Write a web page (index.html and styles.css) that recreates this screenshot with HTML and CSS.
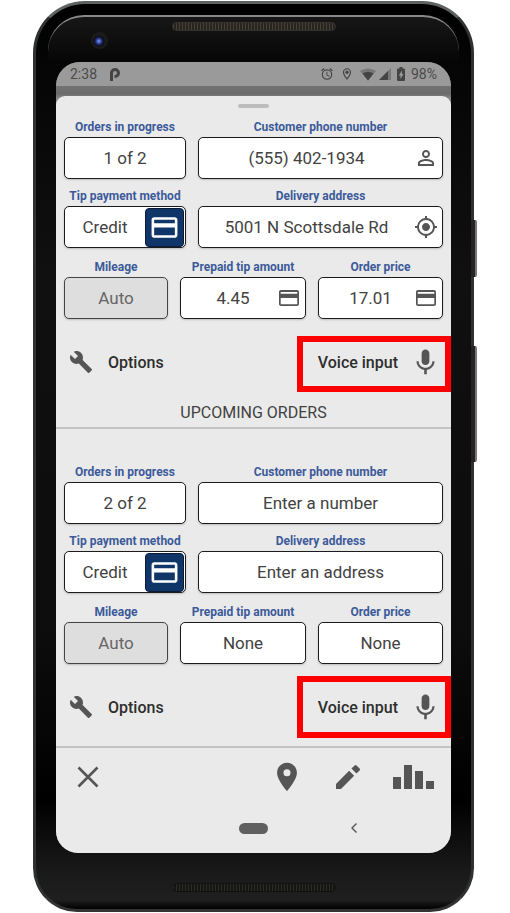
FILE: index.html
```html
<!DOCTYPE html>
<html lang="en">
<head>
<meta charset="utf-8">
<meta name="viewport" content="width=device-width, initial-scale=1">
<title>Orders</title>
<link rel="stylesheet" href="styles.css">
</head>
<body>
<svg class="sprite" aria-hidden="true">
  <symbol id="card" viewBox="0 0 24 24"><path fill-rule="evenodd" d="M20 4H4c-1.100 0-2 .9-2 2v12c0 1.100.9 2 2 2h16c1.100 0 2-.9 2-2V6c0-1.100-.9-2-2-2zm.3 14.300H3.700V12h16.600v6.300zm0-10.600H3.700V6h16.600v1.700z"/></symbol>
  <symbol id="card-bold" viewBox="0 0 24 24"><path fill-rule="evenodd" d="M20 4H4c-1.100 0-2 .9-2 2v12c0 1.100.9 2 2 2h16c1.100 0 2-.9 2-2V6c0-1.100-.9-2-2-2zm0 14H4v-6h16v6zm0-9.200H4V6h16v2.800z"/></symbol>
  <symbol id="person" viewBox="0 0 24 24"><path d="M12 5.900a2.100 2.100 0 1 1 0 4.200 2.100 2.100 0 0 1 0-4.200m0 9c2.970 0 6.100 1.460 6.100 2.100v1.100H5.900V17c0-.64 3.130-2.100 6.100-2.100M12 4C9.790 4 8 5.790 8 8s1.790 4 4 4 4-1.790 4-4-1.790-4-4-4zm0 9c-2.670 0-8 1.340-8 4v3h16v-3c0-2.660-5.330-4-8-4z"/></symbol>
  <symbol id="locate" viewBox="0 0 24 24"><path d="M12 8c-2.210 0-4 1.790-4 4s1.790 4 4 4 4-1.790 4-4-1.790-4-4-4zm8.940 3A8.990 8.990 0 0 0 13 3.060V1h-2v2.060A8.990 8.990 0 0 0 3.060 11H1v2h2.060A8.990 8.990 0 0 0 11 20.940V23h2v-2.060A8.990 8.990 0 0 0 20.940 13H23v-2h-2.060zM12 19c-3.870 0-7-3.130-7-7s3.130-7 7-7 7 3.130 7 7-3.130 7-7 7z"/></symbol>
  <symbol id="wrench" viewBox="0 0 24 24"><path d="M22.700 19l-9.100-9.100c.9-2.300.4-5-1.500-6.900-2-2-5-2.400-7.400-1.300L9 6 6 9 1.600 4.700C.4 7.100.9 10.100 2.900 12.100c1.900 1.900 4.600 2.400 6.900 1.500l9.100 9.100c.4.4 1 .4 1.400 0l2.300-2.300c.5-.4.5-1.100.1-1.400z"/></symbol>
  <symbol id="mic" viewBox="0 0 24 24"><path d="M12 14c1.660 0 2.990-1.340 2.990-3L15 5c0-1.660-1.340-3-3-3S9 3.340 9 5v6c0 1.660 1.340 3 3 3zm5.300-3c0 3-2.540 5.100-5.300 5.100S6.700 14 6.700 11H5c0 3.410 2.720 6.230 6 6.720V21h2v-3.280c3.280-.48 6-3.300 6-6.720h-1.700z"/></symbol>
  <symbol id="pin" viewBox="0 0 24 24"><path d="M12 2C8.130 2 5 5.130 5 9c0 5.250 7 13 7 13s7-7.750 7-13c0-3.870-3.130-7-7-7zm0 9.500a2.500 2.500 0 1 1 0-5 2.500 2.500 0 0 1 0 5z"/></symbol>
</svg>

<div class="phone">
  <div class="bezel-top">
    <div class="speaker"></div>
    <div class="camera"></div>
  </div>

  <div class="screen">
    <header class="status">
      <span>2:38</span>
      <svg class="status-app" width="10" height="13" viewBox="0 0 10 13"><path d="M1.500 13V5a3.500 3.500 0 1 1 3.500 3.500H4.500" fill="none" stroke="#444" stroke-width="3"/></svg>
      <span class="status-icons">
        <svg width="14" height="14" viewBox="0 0 24 24"><path d="M22 5.720l-4.600-3.860-1.290 1.530 4.600 3.860L22 5.720zM7.880 3.390L6.600 1.860 2 5.710l1.290 1.530 4.590-3.850zM12.500 8H11v6l4.750 2.850.75-1.230-4-2.370V8zM12 4a9 9 0 1 0 0 18 9 9 0 0 0 0-18zm0 16a7 7 0 1 1 0-14 7 7 0 0 1 0 14z"/></svg>
        <svg width="14" height="14" viewBox="0 0 24 24"><path d="M12 2C8 2 5 5 5 9c0 5.250 7 13 7 13s7-7.750 7-13c0-4-3-7-7-7zM7 9a5 5 0 0 1 10 0c0 2.880-2.880 7.190-5 9.880C9.920 16.210 7 11.850 7 9z"/><circle cx="12" cy="9" r="2.800"/></svg>
        <svg width="16" height="14" viewBox="0 0 16 14"><path opacity=".4" d="M0 4Q8-1 16 4L8 13.500z"/><path d="M2.500 6.500Q8 3 13.500 6.500L8 13.500z"/></svg>
        <svg class="signal" width="13" height="14" viewBox="0 0 13 14"><path opacity=".4" d="M13 1V13H1z"/><path d="M10 4V13H1z"/></svg>
        <svg width="8" height="14" viewBox="0 0 8 14"><path fill-rule="evenodd" d="M2.500 0h3v1.500H7q1 0 1 1V13q0 1-1 1H1q-1 0-1-1V2.500q0-1 1-1h1.500zM5 3.500L1.800 8.500h1.700v3.500l3-5H5z"/></svg>
        <span>98%</span>
      </span>
    </header>

    <main class="sheet">
      <div class="handle"></div>

      <form class="order">
        <div class="row pair">
          <div class="field"><label for="o1">Orders in progress</label><div class="box"><input id="o1" value="1 of 2"></div></div>
          <div class="field"><label for="c1">Customer phone number</label><div class="box wide-icon"><input id="c1" value="(555) 402-1934"><svg class="icon"><use href="#person"/></svg></div></div>
        </div>
        <div class="row pair">
          <div class="field"><label for="t1">Tip payment method</label><div class="box method"><select id="t1"><option>Credit</option><option>Cash</option></select><button type="button" class="pay" aria-label="Card"><svg><use href="#card-bold"/></svg></button></div></div>
          <div class="field"><label for="d1">Delivery address</label><div class="box wide-icon"><input id="d1" value="5001 N Scottsdale Rd"><svg class="icon"><use href="#locate"/></svg></div></div>
        </div>
        <div class="row triple">
          <div class="field"><label for="m1">Mileage</label><div class="box disabled"><input id="m1" value="Auto" disabled></div></div>
          <div class="field"><label for="p1">Prepaid tip amount</label><div class="box with-icon"><input id="p1" value="4.45"><svg class="icon"><use href="#card"/></svg></div></div>
          <div class="field"><label for="r1">Order price</label><div class="box with-icon"><input id="r1" value="17.01"><svg class="icon"><use href="#card"/></svg></div></div>
        </div>
        <div class="actions">
          <button type="button" class="action options"><svg><use href="#wrench"/></svg>Options</button>
          <button type="button" class="action voice">Voice input<svg><use href="#mic"/></svg></button>
        </div>
      </form>

      <h2>UPCOMING ORDERS</h2>

      <form class="order upcoming">
        <div class="row pair">
          <div class="field"><label for="o2">Orders in progress</label><div class="box"><input id="o2" value="2 of 2"></div></div>
          <div class="field"><label for="c2">Customer phone number</label><div class="box"><input id="c2" placeholder="Enter a number"></div></div>
        </div>
        <div class="row pair">
          <div class="field"><label for="t2">Tip payment method</label><div class="box method"><select id="t2"><option>Credit</option><option>Cash</option></select><button type="button" class="pay" aria-label="Card"><svg><use href="#card-bold"/></svg></button></div></div>
          <div class="field"><label for="d2">Delivery address</label><div class="box"><input id="d2" placeholder="Enter an address"></div></div>
        </div>
        <div class="row triple">
          <div class="field"><label for="m2">Mileage</label><div class="box disabled"><input id="m2" value="Auto" disabled></div></div>
          <div class="field"><label for="p2">Prepaid tip amount</label><div class="box"><input id="p2" placeholder="None"></div></div>
          <div class="field"><label for="r2">Order price</label><div class="box"><input id="r2" placeholder="None"></div></div>
        </div>
        <div class="actions">
          <button type="button" class="action options"><svg><use href="#wrench"/></svg>Options</button>
          <button type="button" class="action voice tall">Voice input<svg><use href="#mic"/></svg></button>
        </div>
      </form>

      <nav class="toolbar">
        <button class="tool close" aria-label="Close"><svg width="24" height="24" viewBox="0 0 24 24"><path d="M2.500 2.500l19 19M21.500 2.500l-19 19" stroke="#555" stroke-width="2.600"/></svg></button>
        <button class="tool" aria-label="Map"><svg width="34" height="34"><use href="#pin"/></svg></button>
        <button class="tool" aria-label="Edit"><svg width="32" height="32" viewBox="0 0 24 24"><path d="M3 17.250V21h3.750L16.600 11.150l-3.750-3.750L3 17.250zM20.710 7.040a1 1 0 0 0 0-1.410l-2.340-2.340a1 1 0 0 0-1.410 0l-2.400 2.400 3.750 3.750 2.400-2.400z"/></svg></button>
        <button class="tool" aria-label="Statistics"><svg width="42" height="24" viewBox="0 0 42 24"><path d="M1 12h8v12H1zM12 0h8v24h-8zM23 6h8v18h-8zM34 16h8v8h-8z"/></svg></button>
      </nav>
      <div class="system">
        <button class="home" aria-label="Home"></button>
        <button class="back" aria-label="Back"><svg width="8" height="12" viewBox="0 0 8 12"><path d="M6.500 1.500L2 6l4.500 4.500" fill="none" stroke="#555" stroke-width="1.400"/></svg></button>
      </div>
    </main>
  </div>

  <div class="bezel-bottom"><div class="speaker dim"></div></div>
  <div class="side-key power"></div>
  <div class="side-key volume"></div>
</div>
</body>
</html>
```
FILE: styles.css
```css
* { box-sizing: border-box; }

body {
  margin: 0;
  background: #fff;
  font-family: Roboto, "Liberation Sans", sans-serif;
  color: #424242;
}

button, input, select {
  font: inherit;
  color: inherit;
  border: 0;
  padding: 0;
  margin: 0;
  background: none;
}

svg { display: block; fill: #555; }
.sprite { position: absolute; width: 0; height: 0; }

/* Device */
.phone {
  position: relative;
  margin: 1px 36px 0 33px;
  padding: 0 20px;
  border: 3px solid #2f3231;
  border-top-color: #5c6360;
  border-bottom-color: #333;
  border-radius: 52px 52px 44px 44px;
  background: linear-gradient(#000, #050505 60px, #101010 30%, #0c0c0c 70%, #000 88%, #1a1a1a 96%, #1f1f1f 99%, #000);
}

.bezel-top {
  height: 58px;
  padding-top: 18px;
  position: relative;
}
.bezel-top::before {
  content: "";
  position: absolute;
  inset: 11px -8px 0;
  border-top: 2px solid #888;
  border-radius: 36px 36px 0 0;
  background: linear-gradient(#171717, #060606);
}
.speaker {
  position: relative;
  width: 164px;
  height: 9px;
  margin: 0 auto;
  border: 1px solid #35322d;
  border-radius: 5px;
  background: repeating-linear-gradient(90deg, #464037 0 1px, #28241f 1px 3px);
}
.camera {
  position: relative;
  width: 17px;
  height: 17px;
  margin: 1px 0 0 35px;
  border-radius: 50%;
  background: radial-gradient(circle at 46% 54%, #5f7de0 0 1px, #232e70 3px, #0b0c18 5px, #1b1b1b 6px);
}
.bezel-bottom {
  height: 56px;
  padding-top: 30px;
}
.speaker.dim { border-color: #111; background: repeating-linear-gradient(90deg, #2c2b26 0 1px, #151512 1px 3px); }

.side-key {
  position: absolute;
  left: 100%;
  width: 6px;
  border-right: 2px solid #777;
  border-radius: 0 2px 2px 0;
  background: #262222;
}
.power { top: 216px; height: 57px; }
.volume { top: 342px; height: 116px; }

/* Screen */
.screen {
  overflow: hidden;
  border-radius: 24px 24px 22px 22px;
  background: linear-gradient(#727272 24px, #6c6c6c 32px, #888 36px);
}
.status {
  display: flex;
  align-items: center;
  height: 24px;
  padding: 0 14px;
  background: #9a9a9a;
  color: #4a4a4a;
  font-size: 14px;
}
.status svg { fill: #444; }
.status-app { margin-left: 13px; }
.status-icons { display: flex; align-items: center; gap: 6px; margin-left: auto; }
.status-icons .signal { margin-left: -4px; }

.sheet {
  margin-top: 10px;
  padding: 8px 8px 0;
  border-radius: 9px 9px 0 0;
  background: #eaeaea;
}
.handle {
  width: 31px;
  height: 4px;
  margin: 0 auto 11px;
  border-radius: 2px;
  background: #bdbdbd;
}

/* Order form */
.row { display: grid; gap: 12px; }
.row + .row { margin-top: 9px; }
.row + .triple { margin-top: 11px; }
.pair { grid-template-columns: 122fr 245fr; }
.triple { grid-template-columns: 104fr 126fr 125fr; }
.field { min-width: 0; }
.field label {
  display: block;
  margin-bottom: 2px;
  font-size: 12px;
  font-weight: 700;
  line-height: 16px;
  text-align: center;
  white-space: nowrap;
  color: #3c5a9a;
}
.box {
  display: flex;
  align-items: center;
  height: 42px;
  border: 1px solid #1c1c1c;
  border-radius: 5px;
  background: #fff;
  box-shadow: 0 1px 2px #bbb;
  font-size: 17px;
}
.box input, .box select {
  flex: 1;
  min-width: 0;
  height: 100%;
  text-align: center;
}
.box select { appearance: none; text-align-last: center; }
.box input::placeholder { color: #424242; opacity: 1; }
.wide-icon { padding: 0 4px 0 0; }
.with-icon { padding: 0 4px 0 8px; }
.icon { width: 24px; height: 24px; flex: none; }
.box.disabled { background: #dedede; border-color: #444; color: #666; }
.method { padding-right: 1px; }
.pay {
  display: grid;
  place-items: center;
  flex: none;
  width: 39px;
  height: 39px;
  border: 1px solid #0a1c38;
  border-radius: 4px;
  background: #103669;
}
.pay svg { width: 31px; height: 31px; fill: #fff; }

.actions {
  display: flex;
  justify-content: space-between;
  height: 48px;
  margin-top: 19px;
}
.action {
  display: flex;
  align-items: center;
  font-size: 16px;
  font-weight: 500;
  color: #2e2e2e;
}
.options { gap: 15px; padding-left: 5px; }
.options svg { width: 24px; height: 24px; }
.voice { position: relative; gap: 12px; padding: 0 2px 0 13px; }
.voice svg { width: 31px; height: 31px; }
.voice::after {
  content: "";
  position: absolute;
  inset: -2px -8px -6px;
  border: 6px solid #f00;
}
.voice.tall::after { inset: -7px -8px; }

h2 {
  margin: 17px -8px 0;
  padding-bottom: 4px;
  border-bottom: 2px solid #c4c4c4;
  font-size: 16px;
  font-weight: 400;
  line-height: 20px;
  text-align: center;
}
.upcoming { padding-top: 35px; }

/* Bottom bars */
.toolbar {
  display: flex;
  align-items: center;
  gap: 28px;
  height: 59px;
  margin: 15px -8px 0;
  padding: 0 17px 0 20px;
  border-top: 2px solid #c4c4c4;
}
.close { margin-right: auto; }
.system {
  display: grid;
  grid-template-columns: 1fr auto 1fr;
  align-items: center;
  height: 48px;
  padding-bottom: 2px;
}
.home { grid-column: 2; width: 29px; height: 11px; border-radius: 6px; background: #606060; }
.back { justify-self: start; margin-left: 82px; }
```
